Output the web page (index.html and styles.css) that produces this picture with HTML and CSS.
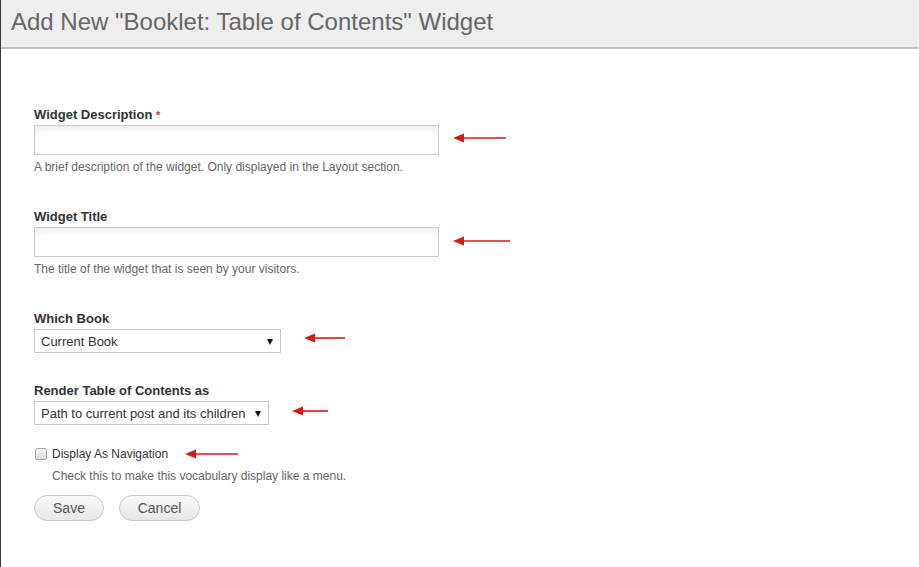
FILE: index.html
```html
<!DOCTYPE html>
<html lang="en">
<head>
    <meta charset="UTF-8">
    <meta name="viewport" content="width=device-width, initial-scale=1.0">
    <title>Add New Widget</title>
    <link rel="stylesheet" href="styles.css">
</head>
<body>
    <div class="page">
        <div class="header">
            <h1>Add New "Booklet: Table of Contents" Widget</h1>
        </div>

        <form class="widget-form">
            <div class="field">
                <label for="description">Widget Description <span class="required">*</span></label>
                <div class="row">
                    <input type="text" id="description" class="text-input">
                    <svg class="arrow arrow-a" width="54" height="10" viewBox="0 0 54 10"><path d="M10 4.2H53V5.8H10z" fill="#d51a1a"/><path d="M0 5L11 0.5V9.5z" fill="#d51a1a"/></svg>
                </div>
                <div class="help">A brief description of the widget. Only displayed in the Layout section.</div>
            </div>

            <div class="field">
                <label for="title">Widget Title</label>
                <div class="row">
                    <input type="text" id="title" class="text-input">
                    <svg class="arrow arrow-b" width="58" height="10" viewBox="0 0 58 10"><path d="M10 4.2H57V5.8H10z" fill="#d51a1a"/><path d="M0 5L11 0.5V9.5z" fill="#d51a1a"/></svg>
                </div>
                <div class="help">The title of the widget that is seen by your visitors.</div>
            </div>

            <div class="field field-select">
                <label for="book">Which Book</label>
                <div class="row">
                    <div class="select-wrap book">
                        <select id="book"><option>Current Book</option></select>
                    </div>
                    <svg class="arrow arrow-c" width="42" height="10" viewBox="0 0 42 10"><path d="M10 4.2H41V5.8H10z" fill="#d51a1a"/><path d="M0 5L11 0.5V9.5z" fill="#d51a1a"/></svg>
                </div>
            </div>

            <div class="field field-select field-last">
                <label for="render">Render Table of Contents as</label>
                <div class="row">
                    <div class="select-wrap render">
                        <select id="render"><option>Path to current post and its children</option></select>
                    </div>
                    <svg class="arrow arrow-d" width="37" height="10" viewBox="0 0 37 10"><path d="M10 4.2H36V5.8H10z" fill="#d51a1a"/><path d="M0 5L11 0.5V9.5z" fill="#d51a1a"/></svg>
                </div>
            </div>

            <div class="check-field">
                <div class="row">
                    <input type="checkbox" id="navigation" class="checkbox">
                    <label for="navigation" class="check-label">Display As Navigation</label>
                    <svg class="arrow arrow-e" width="54" height="10" viewBox="0 0 54 10"><path d="M10 4.2H53V5.8H10z" fill="#d51a1a"/><path d="M0 5L11 0.5V9.5z" fill="#d51a1a"/></svg>
                </div>
                <div class="help check-help">Check this to make this vocabulary display like a menu.</div>
            </div>

            <div class="actions">
                <button type="button" class="btn save">Save</button>
                <button type="button" class="btn cancel">Cancel</button>
            </div>
        </form>
    </div>
</body>
</html>
```

FILE: styles.css
```css
body {
    margin: 0;
    font-family: "Liberation Sans", Arial, sans-serif;
    background-color: #fff;
    color: #333;
}
.page {
    min-height: 567px;
    border-left: 1px solid #3a3a3a;
    box-sizing: border-box;
}
.header {
    height: 47px;
    background-color: #eeeeee;
    border-bottom: 2px solid #c3c3c3;
    margin-right: 1px;
    box-sizing: content-box;
}
.header h1 {
    margin: 0;
    padding: 7px 0 0 10px;
    font-size: 24px;
    line-height: 30px;
    font-weight: normal;
    color: #666;
}
.widget-form {
    padding: 58px 0 0 33px;
}
.field {
    margin-bottom: 35px;
}
.field-select {
    margin-bottom: 30px;
}
.field-last {
    margin-bottom: 21px;
}
.field label {
    display: block;
    font-size: 13px;
    line-height: 16px;
    font-weight: bold;
    color: #333;
    margin-bottom: 2px;
}
.required {
    color: #c33;
    font-size: 11px;
}
.row {
    display: flex;
    align-items: center;
}
.text-input {
    width: 405px;
    height: 30px;
    box-sizing: border-box;
    margin: 0;
    border: 1px solid #cccccc;
    background: #fff;
    box-shadow: inset 0 4px 6px rgba(0, 0, 0, 0.07);
    font-family: inherit;
}
.help {
    font-size: 12px;
    line-height: 14px;
    color: #666;
    margin-top: 5px;
}
.arrow {
    display: block;
    margin-bottom: 5px;
}
.arrow-a { margin-left: 14px; }
.arrow-b { margin-left: 14px; margin-bottom: 3px; }
.arrow-c { margin-left: 23px; margin-bottom: 6px; }
.arrow-d { margin-left: 23px; margin-bottom: 4px; }
.arrow-e { margin-left: 17px; margin-bottom: 0; }
.select-wrap {
    position: relative;
    height: 24px;
}
.select-wrap select {
    appearance: none;
    -webkit-appearance: none;
    height: 24px;
    margin: 0;
    padding: 0 0 0 6px;
    border: 1px solid #c6c6c6;
    border-radius: 0;
    background: #fff;
    font-family: inherit;
    font-size: 13px;
    color: #333;
    box-sizing: border-box;
}
.book select { width: 247px; }
.render select { width: 235px; }
.select-wrap::after {
    content: "";
    position: absolute;
    right: 8px;
    top: 10px;
    border-left: 3.5px solid transparent;
    border-right: 3.5px solid transparent;
    border-top: 6px solid #111;
}
.checkbox {
    appearance: none;
    -webkit-appearance: none;
    width: 12px;
    height: 12px;
    margin: 0 5px 0 1px;
    border: 1px solid #a8a8a8;
    border-radius: 2px;
    background: linear-gradient(#f6f6f6, #dedede);
    box-sizing: border-box;
}
.check-label {
    font-size: 12px;
    line-height: 16px;
    color: #333;
}
.check-help {
    margin: 7px 0 0 18px;
}
.actions {
    display: flex;
    gap: 15px;
    margin-top: 12px;
}
.btn {
    height: 26px;
    padding: 0;
    border: 1px solid #c8c8c8;
    border-radius: 13px;
    background: linear-gradient(#fafafa, #e6e6e6);
    font-family: inherit;
    font-size: 14px;
    color: #555;
    box-sizing: border-box;
}
.save { width: 70px; }
.cancel { width: 81px; }
```
